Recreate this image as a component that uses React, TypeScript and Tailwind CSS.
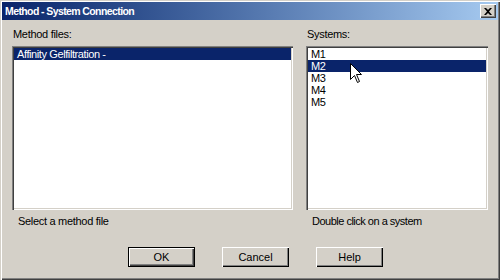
import React from "react";

const font = { fontFamily: '"Liberation Sans", Arial, sans-serif' };

function Btn({ label, def }: { label: string; def?: boolean }) {
  return (
    <div
      className={
        "w-[67px] h-[20px] flex items-center justify-center text-[11px] text-black bg-[#d4d0c8] " +
        (def
          ? "border border-black shadow-[inset_1px_1px_#ffffff,inset_-1px_-1px_#404040,inset_-2px_-2px_#808080]"
          : "shadow-[inset_1px_1px_#ffffff,inset_-1px_-1px_#000000,inset_-2px_-2px_#808080,inset_2px_2px_#d4d0c8]")
      }
    >
      {label}
    </div>
  );
}

function ListBox({ items, selected, width }: { items: string[]; selected: number; width: string }) {
  return (
    <div
      className={
        width +
        " h-[164px] bg-white p-[2px] shadow-[inset_1px_1px_#808080,inset_2px_2px_#404040,inset_-1px_-1px_#ffffff,inset_-2px_-2px_#d4d0c8]"
      }
    >
      {items.map((it, i) => (
        <div
          key={it}
          className={
            "h-[12px] leading-[12px] pl-[3px] text-[11px] tracking-[-0.4px] whitespace-nowrap " +
            (i === selected ? "bg-[#0a246a] text-white" : "text-black")
          }
        >
          {it}
        </div>
      ))}
    </div>
  );
}

export default function App() {
  return (
    <div
      style={font}
      className="relative w-[500px] h-[280px] bg-[#d4d0c8] p-[2px] shadow-[inset_1px_1px_#d4d0c8,inset_2px_2px_#ffffff,inset_-1px_-1px_#404040,inset_-2px_-2px_#808080] overflow-hidden"
    >
      <div className="h-[18px] flex items-center justify-between pl-[3px] pr-[2px] bg-gradient-to-r from-[#0a246a] to-[#a6caf0]">
        <span className="text-white font-bold text-[10.5px] tracking-[-0.6px] leading-none">Method - System Connection</span>
        <div className="w-[16px] h-[14px] bg-[#d4d0c8] flex items-center justify-center shadow-[inset_1px_1px_#ffffff,inset_-1px_-1px_#404040,inset_-2px_-2px_#808080]">
          <svg width="8" height="7" viewBox="0 0 8 7">
            <path d="M0 0h2l2 2 2-2h2L5 3.5 8 7H6L4 5 2 7H0l3-3.5z" fill="#000" />
          </svg>
        </div>
      </div>
      <div className="flex gap-[13px] pl-[10px] pt-[8px]">
        <div className="flex flex-col">
          <div className="h-[13px] leading-[13px] text-[11px] tracking-[-0.3px] pl-[1px] text-black">Method files:</div>
          <div className="mt-[5px]">
            <ListBox items={["Affinity Gelfiltration -"]} selected={0} width="w-[281px]" />
          </div>
          <div className="mt-[5px] h-[13px] leading-[13px] text-[11px] tracking-[-0.3px] pl-[6px] text-black">Select a method file</div>
        </div>
        <div className="flex flex-col">
          <div className="h-[13px] leading-[13px] text-[11px] tracking-[-0.3px] pl-[1px] text-black">Systems:</div>
          <div className="mt-[5px]">
            <ListBox items={["M1", "M2", "M3", "M4", "M5"]} selected={1} width="w-[182px]" />
          </div>
          <div className="mt-[5px] h-[13px] leading-[13px] text-[11px] tracking-[-0.5px] pl-[6px] text-black">Double click on a system</div>
        </div>
      </div>
      <div className="flex gap-[27px] pl-[126px] mt-[19px]">
        <Btn label="OK" def />
        <Btn label="Cancel" />
        <Btn label="Help" />
      </div>
      <svg
        className="absolute left-[350px] top-[63px]"
        width="13"
        height="21"
        viewBox="0 0 13 21"
      >
        <path
          d="M0.5 0.5 L0.5 16.5 L4.5 12.5 L7.5 19.5 L9.5 18.5 L6.5 11.5 L11.5 11.5 Z"
          fill="#fff"
          stroke="#000"
          strokeWidth="1"
        />
      </svg>
    </div>
  );
}
